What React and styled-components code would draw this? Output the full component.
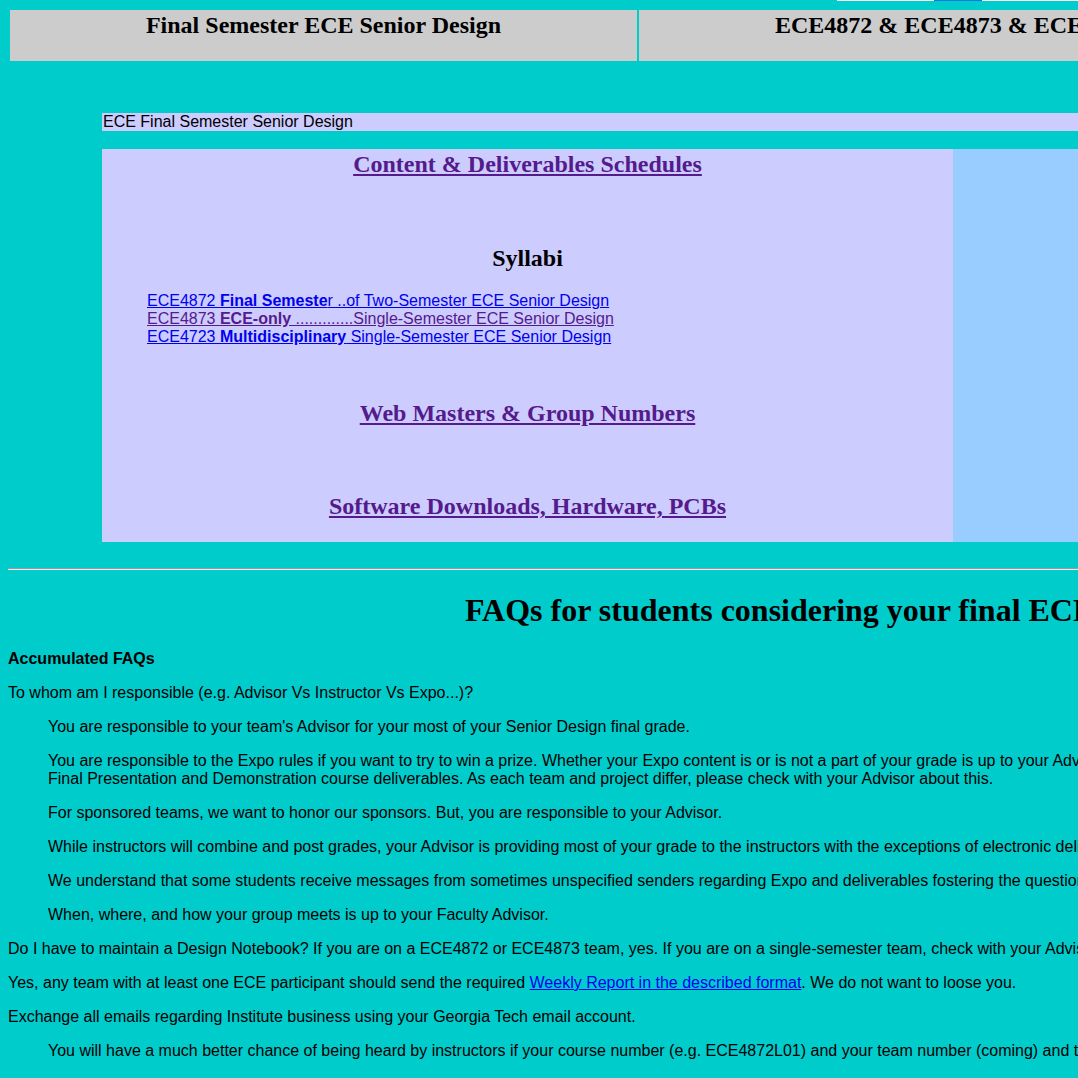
import React from "react";
import styled, { createGlobalStyle } from "styled-components";

const GlobalStyle = createGlobalStyle`
  html { overflow: hidden; }
  body {
    margin: 0;
    background: #00cccc;
    font-family: "Liberation Serif", "Times New Roman", serif;
    color: #000;
  }
`;

const Frame = styled.div`
  position: relative;
  width: 1078px;
  height: 1078px;
  overflow: hidden;
  box-sizing: border-box;
  padding: 8px;
`;

const Page = styled.div`
  width: 1740px;
`;

const TopStrip = styled.div`
  position: absolute;
  top: 0;
  left: 837px;
  width: 241px;
  height: 1px;
  background: #ffffff;
  display: flex;
  padding-left: 97px;
  box-sizing: border-box;
`;

const StripMark = styled.span`
  width: 48px;
  height: 1px;
  background: #1a73e8;
`;

const HeaderTable = styled.div`
  display: grid;
  grid-template-columns: 627px 628px;
  gap: 2px;
  padding: 2px;
  width: max-content;
`;

const HeaderCell = styled.div`
  background: #cccccc;
  height: 51px;
  box-sizing: border-box;
  padding: 1px;
  text-align: center;
  font-size: 24px;
  font-weight: bold;
  line-height: 28px;
  white-space: nowrap;
`;

const Nav = styled.div`
  margin: 50px 94px 0;
`;

const NavTitle = styled.div`
  background: #ccccff;
  font-family: "Liberation Sans", Arial, sans-serif;
  font-size: 16px;
  line-height: 18px;
  height: 18px;
  padding-left: 1px;
`;

const NavRow = styled.div`
  margin-top: 18px;
  display: grid;
  grid-template-columns: 851px 1fr;
  height: 393px;
`;

const NavMain = styled.div`
  background: #ccccff;
  display: flex;
  flex-direction: column;
  padding-top: 1px;
`;

const NavSide = styled.div`
  background: #99ccff;
`;

const SectionLink = styled.a`
  display: block;
  align-self: center;
  margin-top: ${(p) => p.$mt}px;
  font-size: 24px;
  font-weight: bold;
  line-height: 28px;
  color: #551a8b;
  text-decoration: underline;
  cursor: pointer;
`;

const SectionTitle = styled.div`
  align-self: center;
  margin-top: ${(p) => p.$mt}px;
  font-size: 24px;
  font-weight: bold;
  line-height: 28px;
`;

const SyllabusList = styled.div`
  margin: 20px 0 0 45px;
  display: flex;
  flex-direction: column;
  align-items: flex-start;
  font-family: "Liberation Sans", Arial, sans-serif;
  font-size: 16px;
  line-height: 18px;
`;

const SyllabusLink = styled.a`
  color: ${(p) => (p.$visited ? "#551a8b" : "#0000ee")};
  text-decoration: underline;
  cursor: pointer;
  white-space: nowrap;
`;

const Rule = styled.hr`
  margin: 26px 0 0;
  border: none;
  border-top: 1px solid #9a9a9a;
  border-bottom: 1px solid #eeeeee;
  height: 0;
`;

const FaqHeading = styled.h1`
  margin: 22px 0 21px;
  text-align: center;
  font-size: 32px;
  line-height: 37px;
  font-weight: bold;
`;

const FaqBody = styled.div`
  font-family: "Liberation Sans", Arial, sans-serif;
  font-size: 16px;
  line-height: 18px;
`;

const FaqPara = styled.p`
  margin: 16px 0;
  font-weight: ${(p) => (p.$bold ? "bold" : "normal")};
`;

const Indented = styled.blockquote`
  margin: 16px 40px;
`;

const InlineLink = styled.a`
  color: #0000ee;
  text-decoration: underline;
  cursor: pointer;
`;

export default function App() {
  return (
    <>
      <GlobalStyle />
      <Frame>
        <TopStrip>
          <StripMark />
        </TopStrip>
        <Page>
          <HeaderTable>
            <HeaderCell>Final Semester ECE Senior Design</HeaderCell>
            <HeaderCell>ECE4872 &amp; ECE4873 &amp; ECE4723</HeaderCell>
          </HeaderTable>

          <Nav>
            <NavTitle>ECE Final Semester Senior Design</NavTitle>
            <NavRow>
              <NavMain>
                <SectionLink $mt={0}>Content &amp; Deliverables Schedules</SectionLink>
                <SectionTitle $mt={66}>Syllabi</SectionTitle>
                <SyllabusList>
                  <SyllabusLink>
                    ECE4872 <b>Final Semeste</b>r ..of Two-Semester ECE Senior Design
                  </SyllabusLink>
                  <SyllabusLink $visited>
                    ECE4873 <b>ECE-only</b> .............Single-Semester ECE Senior Design
                  </SyllabusLink>
                  <SyllabusLink>
                    ECE4723 <b>Multidisciplinary</b> Single-Semester ECE Senior Design
                  </SyllabusLink>
                </SyllabusList>
                <SectionLink $mt={53}>Web Masters &amp; Group Numbers</SectionLink>
                <SectionLink $mt={65}>Software Downloads, Hardware, PCBs</SectionLink>
              </NavMain>
              <NavSide />
            </NavRow>
          </Nav>

          <Rule />
          <FaqHeading>FAQs for students considering your final ECE Senior Design</FaqHeading>

          <FaqBody>
            <FaqPara $bold>Accumulated FAQs</FaqPara>
            <FaqPara>To whom am I responsible (e.g. Advisor Vs Instructor Vs Expo...)?</FaqPara>
            <Indented>
              <FaqPara>You are responsible to your team's Advisor for your most of your Senior Design final grade.</FaqPara>
              <FaqPara>
                You are responsible to the Expo rules if you want to try to win a prize. Whether your Expo content is or is not a part of your grade is up to your Advisor. Expo content may overlap with your
                <br />
                Final Presentation and Demonstration course deliverables. As each team and project differ, please check with your Advisor about this.
              </FaqPara>
              <FaqPara>For sponsored teams, we want to honor our sponsors. But, you are responsible to your Advisor.</FaqPara>
              <FaqPara>While instructors will combine and post grades, your Advisor is providing most of your grade to the instructors with the exceptions of electronic deliverables.</FaqPara>
              <FaqPara>We understand that some students receive messages from sometimes unspecified senders regarding Expo and deliverables fostering the question of to whom you are responsible.</FaqPara>
              <FaqPara>When, where, and how your group meets is up to your Faculty Advisor.</FaqPara>
            </Indented>
            <FaqPara>Do I have to maintain a Design Notebook? If you are on a ECE4872 or ECE4873 team, yes. If you are on a single-semester team, check with your Advisor.</FaqPara>
            <FaqPara>
              Yes, any team with at least one ECE participant should send the required{" "}
              <InlineLink>Weekly Report in the described format</InlineLink>. We do not want to loose you.
            </FaqPara>
            <FaqPara>Exchange all emails regarding Institute business using your Georgia Tech email account.</FaqPara>
            <Indented>
              <FaqPara>You will have a much better chance of being heard by instructors if your course number (e.g. ECE4872L01) and your team number (coming) and team name are in the subject line of your emails.</FaqPara>
            </Indented>
          </FaqBody>
        </Page>
      </Frame>
    </>
  );
}
